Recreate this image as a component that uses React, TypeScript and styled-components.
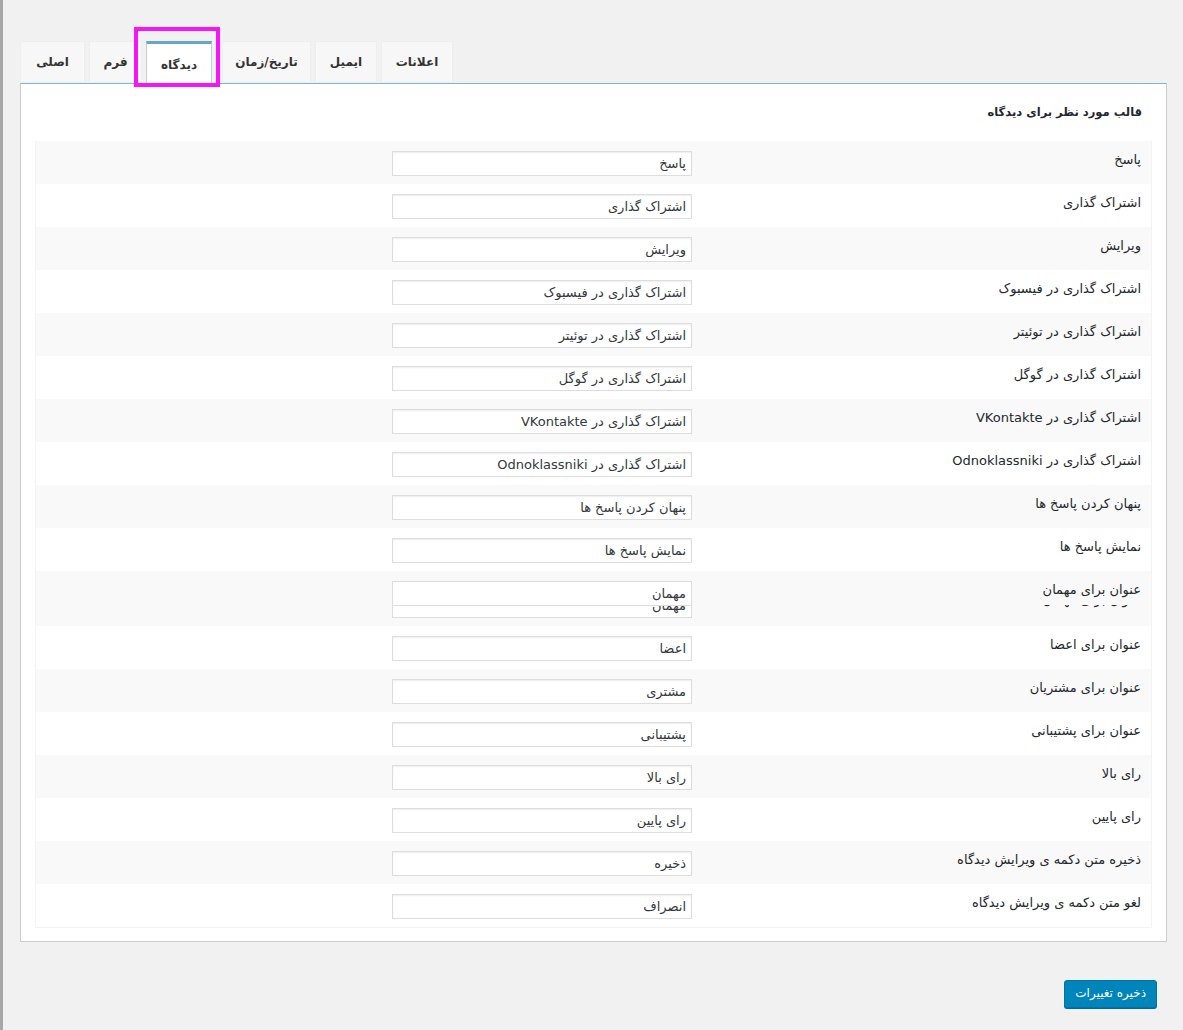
import React from "react";
import styled, { createGlobalStyle } from "styled-components";

const GlobalStyle = createGlobalStyle`
  html, body { margin: 0; padding: 0; }
  body {
    background: #f1f1f1;
    font-family: "DejaVu Sans", Tahoma, sans-serif;
    font-size: 13px;
    color: #23282d;
  }
`;

const Page = styled.div`
  min-height: 1030px;
  border-left: 3px solid #a7a7a7;
  box-sizing: border-box;
  padding: 41px 16px 0 17px;
`;

const TabBar = styled.div`
  position: relative;
  display: flex;
  align-items: flex-end;
  gap: 4px;
  height: 42px;
`;

const Tab = styled.div<{ $active?: boolean; $w: number }>`
  box-sizing: border-box;
  width: ${(p) => p.$w}px;
  height: ${(p) => (p.$active ? 43 : 42)}px;
  margin-bottom: ${(p) => (p.$active ? -1 : 0)}px;
  margin-right: ${(p) => (p.$active ? 6 : 0)}px;
  display: flex;
  align-items: center;
  justify-content: center;
  direction: rtl;
  font-weight: bold;
  font-size: 12px;
  color: #333;
  background: ${(p) => (p.$active ? "#fff" : "#f7f7f7")};
  border: 1px solid ${(p) => (p.$active ? "#ccc" : "#eee")};
  border-top: ${(p) => (p.$active ? "3px solid #66a7c5" : "1px solid #eee")};
  border-bottom: ${(p) => (p.$active ? "none" : "1px solid #eee")};
  padding-top: ${(p) => (p.$active ? 2 : 0)}px;
  position: relative;
  z-index: ${(p) => (p.$active ? 2 : 1)};
`;

const Highlight = styled.div`
  position: absolute;
  left: 114px;
  top: -14px;
  width: 86px;
  height: 60px;
  box-sizing: border-box;
  border: 4px solid #f516f5;
  z-index: 3;
  pointer-events: none;
`;

const Panel = styled.div`
  background: #fff;
  border: 1px solid #ccc;
  border-top: 1px solid #7fb6d0;
  padding: 0 14px 13px;
  direction: rtl;
`;

const Heading = styled.h3`
  margin: 0;
  padding: 20px 10px 21px;
  font-size: 11.5px;
  font-weight: bold;
  line-height: 16px;
  color: #23282d;
`;

const Table = styled.div`
  border: 1px solid #f3f3f3;
  border-top: none;
`;

const Row = styled.div<{ $striped?: boolean; $tall?: boolean }>`
  display: grid;
  grid-template-columns: 449px 1fr;
  height: ${(p) => (p.$tall ? 55 : 43)}px;
  background: ${(p) => (p.$striped ? "#f9f9f9" : "#fff")};
  box-sizing: border-box;
`;

const Label = styled.div`
  padding: 11px 10px 0;
  line-height: 16px;
  color: #23282d;
  overflow: hidden;
`;

const Ghost = styled.div`
  height: 3px;
  overflow: hidden;
  line-height: 16px;
  margin-top: 7px;
  & > span {
    display: block;
    margin-top: -13px;
  }
`;

const Field = styled.div`
  padding: 10px 10px 0;
`;

const Input = styled.input`
  box-sizing: border-box;
  width: 300px;
  height: 25px;
  border: 1px solid #ddd;
  box-shadow: inset 0 1px 2px rgba(0, 0, 0, 0.07);
  background: #fff;
  font-family: "DejaVu Sans", Tahoma, sans-serif;
  font-size: 13px;
  color: #32373c;
  padding: 0 5px;
  direction: rtl;
  outline: none;
  display: block;
`;

const GlitchBox = styled.div`
  box-sizing: border-box;
  width: 300px;
  height: 37px;
  border: 1px solid #ddd;
  background: #fff;
  display: flex;
  flex-direction: column;
  color: #32373c;
`;

const GlitchTop = styled.div`
  height: 24px;
  border-bottom: 1px solid #ddd;
  padding: 0 5px;
  line-height: 24px;
  box-sizing: border-box;
`;

const GlitchBottom = styled.div`
  height: 10px;
  overflow: hidden;
  padding: 0 5px;
  & > span {
    display: block;
    line-height: 16px;
    margin-top: -8px;
  }
`;

const Footer = styled.div`
  display: flex;
  justify-content: flex-end;
  padding: 38px 10px 0 0;
`;

const SaveButton = styled.button`
  height: 28px;
  padding: 0 10px 2px;
  background: #0085ba;
  border: 1px solid #0073aa;
  border-radius: 3px;
  box-shadow: 0 1px 0 #006799;
  color: #fff;
  font-family: "DejaVu Sans", Tahoma, sans-serif;
  font-size: 12px;
  direction: rtl;
`;

const rows: [string, string][] = [
  ["پاسخ", "پاسخ"],
  ["اشتراک گذاری", "اشتراک گذاری"],
  ["ویرایش", "ویرایش"],
  ["اشتراک گذاری در فیسبوک", "اشتراک گذاری در فیسبوک"],
  ["اشتراک گذاری در توئیتر", "اشتراک گذاری در توئیتر"],
  ["اشتراک گذاری در گوگل", "اشتراک گذاری در گوگل"],
  ["اشتراک گذاری در VKontakte", "اشتراک گذاری در VKontakte"],
  ["اشتراک گذاری در Odnoklassniki", "اشتراک گذاری در Odnoklassniki"],
  ["پنهان کردن پاسخ ها", "پنهان کردن پاسخ ها"],
  ["نمایش پاسخ ها", "نمایش پاسخ ها"],
  ["عنوان برای مهمان", "مهمان"],
  ["عنوان برای اعضا", "اعضا"],
  ["عنوان برای مشتریان", "مشتری"],
  ["عنوان برای پشتیبانی", "پشتیبانی"],
  ["رای بالا", "رای بالا"],
  ["رای پایین", "رای پایین"],
  ["ذخیره متن دکمه ی ویرایش دیدگاه", "ذخیره"],
  ["لغو متن دکمه ی ویرایش دیدگاه", "انصراف"],
];

const tabs: { label: string; w: number; active?: boolean }[] = [
  { label: "اصلی", w: 65 },
  { label: "فرم", w: 53 },
  { label: "دیدگاه", w: 66, active: true },
  { label: "تاریخ/زمان", w: 89 },
  { label: "ایمیل", w: 62 },
  { label: "اعلانات", w: 72 },
];

export default function App() {
  return (
    <>
      <GlobalStyle />
      <Page>
        <TabBar>
          {tabs.map((t) => (
            <Tab key={t.label} $active={t.active} $w={t.w}>
              {t.label}
            </Tab>
          ))}
          <Highlight />
        </TabBar>
        <Panel>
          <Heading>قالب مورد نظر برای دیدگاه</Heading>
          <Table>
            {rows.map(([label, value], i) => {
              const tall = i === 10;
              return (
                <Row key={label} $striped={i % 2 === 0} $tall={tall}>
                  <Label>
                    {label}
                    {tall && (
                      <Ghost aria-hidden>
                        <span>{label}</span>
                      </Ghost>
                    )}
                  </Label>
                  <Field>
                    {tall ? (
                      <GlitchBox>
                        <GlitchTop>{value}</GlitchTop>
                        <GlitchBottom aria-hidden>
                          <span>{value}</span>
                        </GlitchBottom>
                      </GlitchBox>
                    ) : (
                      <Input defaultValue={value} />
                    )}
                  </Field>
                </Row>
              );
            })}
          </Table>
        </Panel>
        <Footer>
          <SaveButton>ذخیره تغییرات</SaveButton>
        </Footer>
      </Page>
    </>
  );
}
